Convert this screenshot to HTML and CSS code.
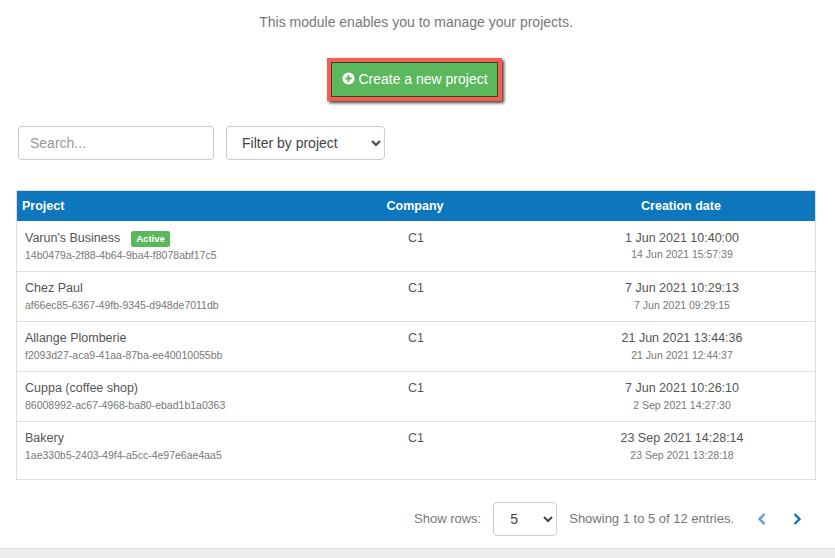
FILE: index.html
```html
<!DOCTYPE html>
<html lang="en">
<head>
    <meta charset="UTF-8">
    <meta name="viewport" content="width=device-width, initial-scale=1.0">
    <title>Projects</title>
    <link rel="stylesheet" href="styles.css">
</head>
<body>
    <div class="content">
        <p class="intro">This module enables you to manage your projects.</p>
        <div class="create-row">
            <button class="create-button">
                <svg class="plus-icon" viewBox="0 0 14 14" width="13" height="13"><circle cx="7" cy="7" r="6.5" fill="#fff"/><path d="M7 3.5v7M3.5 7h7" stroke="#5cb85c" stroke-width="2.2"/></svg>
                Create a new project
            </button>
        </div>
        <div class="filters">
            <input class="search" type="text" placeholder="Search...">
            <select class="filter-select">
                <option>Filter by project</option>
            </select>
        </div>
        <table class="projects">
            <thead>
                <tr>
                    <th class="col-project">Project</th>
                    <th class="col-company">Company</th>
                    <th class="col-date">Creation date</th>
                </tr>
            </thead>
            <tbody>
                <tr class="first-row">
                    <td class="cell-project">Varun's Business <span class="badge">Active</span><small>14b0479a-2f88-4b64-9ba4-f8078abf17c5</small></td>
                    <td class="cell-company">C1</td>
                    <td class="cell-date">1 Jun 2021 10:40:00<small>14 Jun 2021 15:57:39</small></td>
                </tr>
                <tr>
                    <td class="cell-project">Chez Paul<small>af66ec85-6367-49fb-9345-d948de7011db</small></td>
                    <td class="cell-company">C1</td>
                    <td class="cell-date">7 Jun 2021 10:29:13<small>7 Jun 2021 09:29:15</small></td>
                </tr>
                <tr>
                    <td class="cell-project">Allange Plomberie<small>f2093d27-aca9-41aa-87ba-ee40010055bb</small></td>
                    <td class="cell-company">C1</td>
                    <td class="cell-date">21 Jun 2021 13:44:36<small>21 Jun 2021 12:44:37</small></td>
                </tr>
                <tr>
                    <td class="cell-project">Cuppa (coffee shop)<small>86008992-ac67-4968-ba80-ebad1b1a0363</small></td>
                    <td class="cell-company">C1</td>
                    <td class="cell-date">7 Jun 2021 10:26:10<small>2 Sep 2021 14:27:30</small></td>
                </tr>
                <tr class="last-row">
                    <td class="cell-project">Bakery<small>1ae330b5-2403-49f4-a5cc-4e97e6ae4aa5</small></td>
                    <td class="cell-company">C1</td>
                    <td class="cell-date">23 Sep 2021 14:28:14<small>23 Sep 2021 13:28:18</small></td>
                </tr>
            </tbody>
        </table>
        <div class="pager">
            <span class="pager-label">Show rows:</span>
            <select class="rows-select">
                <option>5</option>
            </select>
            <span class="pager-info">Showing 1 to 5 of 12 entries.</span>
            <svg class="pager-arrow" viewBox="0 0 10 14" width="10" height="14"><path d="M7.5 2 2.5 7l5 5" fill="none" stroke="#5a9fd0" stroke-width="2.4"/></svg>
            <svg class="pager-arrow" viewBox="0 0 10 14" width="10" height="14"><path d="M2.5 2l5 5-5 5" fill="none" stroke="#0e76bc" stroke-width="2.4"/></svg>
        </div>
    </div>
    <div class="footer"></div>
</body>
</html>
```

FILE: styles.css
```css
body {
    font-family: "Liberation Sans", Arial, sans-serif;
    font-size: 12.5px;
    color: #555;
    background: #fff;
    margin: 0;
    height: 558px;
    overflow: hidden;
    display: flex;
    flex-direction: column;
}
.content {
    height: 548px;
    flex-shrink: 0;
    padding: 0 19px 0 16px;
}
.intro {
    margin: 0;
    padding-top: 14px;
    height: 40px;
    box-sizing: border-box;
    line-height: 17px;
    font-size: 14px;
    color: #777;
    text-align: center;
}
.create-row {
    display: flex;
    justify-content: center;
    padding-top: 18px;
}
.create-button {
    width: 175px;
    height: 43px;
    margin-left: -3px;
    padding: 0 0 2px 1px;
    font-family: inherit;
    font-size: 14px;
    color: #fff;
    background: #5cb85c;
    border: 4px solid #fb5b50;
    outline: none;
    box-shadow: inset 0 0 0 1px #2b4a2b, 2px 2px 3px rgba(0, 0, 0, 0.75);
    display: flex;
    align-items: center;
    justify-content: center;
    gap: 3px;
}
.filters {
    display: flex;
    gap: 12px;
    padding: 25px 0 0 2px;
}
.search {
    width: 196px;
    height: 34px;
    box-sizing: border-box;
    padding: 0 11px;
    font-family: inherit;
    font-size: 14px;
    border: 1px solid #ccc;
    border-radius: 4px;
}
.search::placeholder {
    color: #999;
}
.filter-select {
    width: 159px;
    height: 34px;
    padding: 0 11px;
    font-family: inherit;
    font-size: 14px;
    color: #444;
    background: #fff;
    border: 1px solid #ccc;
    border-radius: 4px;
}
.projects {
    width: 800px;
    margin-top: 30px;
    border-collapse: collapse;
    table-layout: fixed;
    border: 1px solid #ddd;
}
.projects th {
    height: 30px;
    padding: 0 5px;
    font-size: 12.5px;
    color: #fff;
    background: #0e76bc;
}
.col-project {
    width: 256px;
    text-align: left;
}
.col-company {
    width: 254px;
}
.projects td {
    height: 50px;
    padding: 8px 8px 0;
    box-sizing: border-box;
    vertical-align: top;
    line-height: 16px;
    border-bottom: 1px solid #ddd;
}
.projects .first-row td {
    padding-top: 9px;
}
.projects .last-row td {
    height: 58px;
    border-bottom: none;
}
.projects small {
    display: block;
    font-size: 10.5px;
    line-height: 14px;
    margin-top: 2px;
    color: #777;
}
.projects .first-row small {
    margin-top: 1px;
}
.projects .cell-company,
.projects .cell-date {
    padding-left: 10px;
    text-align: center;
}
.badge {
    display: inline-block;
    margin-left: 7px;
    padding: 0 5.5px;
    font-size: 9.5px;
    font-weight: bold;
    line-height: 16px;
    color: #fff;
    background: #5cb85c;
    border-radius: 2px;
    vertical-align: 0;
}
.pager {
    display: flex;
    align-items: center;
    justify-content: flex-end;
    height: 34px;
    margin-top: 22px;
    padding-right: 14px;
    font-size: 13px;
    color: #777;
}
.pager-label {
    margin-right: 12px;
}
.rows-select {
    width: 64px;
    height: 34px;
    padding: 0 12px;
    font-family: inherit;
    font-size: 14px;
    color: #444;
    background: #fff;
    border: 1px solid #ccc;
    border-radius: 4px;
    margin-right: 12px;
}
.pager-info {
    margin-right: 23px;
}
.pager-arrow + .pager-arrow {
    margin-left: 25px;
}
.footer {
    height: 10px;
    flex-shrink: 0;
    box-sizing: border-box;
    background: #eee;
    border-top: 1px solid #ddd;
}
```
